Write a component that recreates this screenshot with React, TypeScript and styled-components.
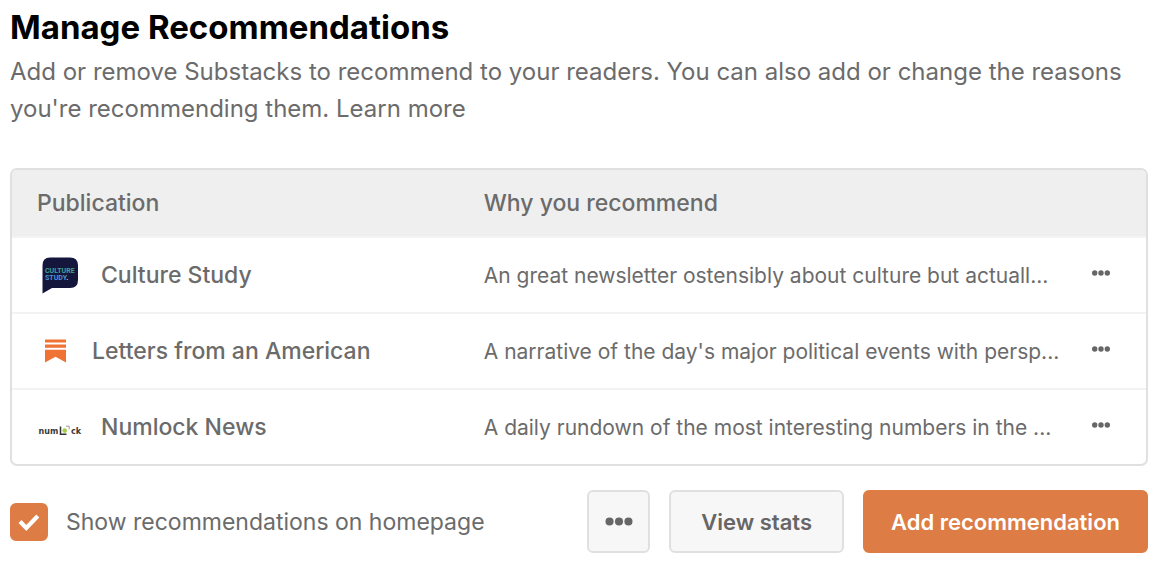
import React from "react";
import styled, { createGlobalStyle } from "styled-components";

const GlobalStyle = createGlobalStyle`
  *, *::before, *::after { box-sizing: border-box; }
  body {
    margin: 0;
    background: #fff;
    color: #6b6b6b;
    font-family: Inter, "Liberation Sans", sans-serif;
    font-size: 23px;
  }
`;

const Page = styled.main`
  padding: 6px 12px 16px 10px;
`;

const Title = styled.h1`
  margin: 0;
  color: #000;
  font-size: 33px;
  font-weight: 700;
  line-height: 42px;
`;

const Description = styled.p`
  margin: 5px 0 41px;
  font-size: 24px;
  line-height: 37px;
`;

const PlainLink = styled.a`
  color: inherit;
  text-decoration: none;
`;

const TableFrame = styled.div`
  overflow: hidden;
  border: 2px solid #e0e0e0;
  border-radius: 7px;
`;

const Table = styled.table`
  width: 100%;
  table-layout: fixed;
  border-collapse: separate;
  border-spacing: 0;
`;

const NameColumn = styled.col`
  width: 41.6%;
`;

const MenuColumn = styled.col`
  width: 74px;
`;

const HeadCell = styled.th`
  height: 66px;
  padding: 0;
  background: #efefef;
  font-size: 23px;
  font-weight: 500;
  text-align: left;

  &:first-child { padding-left: 25px; }
`;

const Row = styled.tr`
  & > * { border-top: 2px solid #f3f3f5; }
`;

const NameCell = styled.th`
  height: 76px;
  padding: 0 0 0 25px;
  font-size: 23px;
  font-weight: 500;
  text-align: left;
`;

const Publication = styled.div`
  display: flex;
  align-items: center;
  gap: 18px;
`;

const Logo = styled.span<{ $width: number }>`
  display: flex;
  justify-content: center;
  width: ${(p) => p.$width}px;

  svg { display: block; flex: none; }
`;

const ReasonCell = styled.td`
  padding: 0;
  font-size: 21px;
  white-space: nowrap;
`;

const MenuCell = styled.td`
  padding: 0 36px 4px 0;
`;

const RowMenuButton = styled.button`
  display: flex;
  margin-left: auto;
  padding: 0;
  border: 0;
  background: none;
  color: #666;
  cursor: pointer;
`;

const Footer = styled.footer`
  display: flex;
  align-items: center;
  justify-content: space-between;
  margin-top: 24px;
`;

const ToggleLabel = styled.label`
  display: flex;
  align-items: center;
  gap: 18px;
  cursor: pointer;
`;

const Tick = styled.span`
  display: grid;
  width: 38px;
  height: 38px;

  > * { grid-area: 1 / 1; }
  svg { pointer-events: none; }
`;

const TickInput = styled.input`
  width: 38px;
  height: 38px;
  margin: 0;
  appearance: none;
  border: 2px solid #dd7c44;
  border-radius: 6px;
  background: #fff;
  cursor: pointer;

  &:checked { background: #dd7c44; }
`;

const Actions = styled.div`
  display: flex;
  gap: 19px;
`;

const Button = styled.button<{ $primary?: boolean }>`
  display: flex;
  align-items: center;
  justify-content: center;
  height: 63px;
  padding: 0 ${(p) => (p.$primary ? 26 : 30)}px;
  border: 2px solid ${(p) => (p.$primary ? "#dd7c44" : "#e0e0e0")};
  border-radius: 6px;
  background: ${(p) => (p.$primary ? "#dd7c44" : "#f7f7f7")};
  color: ${(p) => (p.$primary ? "#fff" : "#666")};
  font-family: inherit;
  font-size: 22px;
  font-weight: 600;
  cursor: pointer;
`;

const MoreButton = styled(Button)`
  width: 63px;
  padding: 0;
`;

function Dots({ width }: { width: number }) {
  return (
    <svg width={width} height={Math.round(width / 3)} viewBox="0 0 30 10" fill="currentColor" aria-hidden="true">
      <circle cx="4.5" cy="5" r="4.5" />
      <circle cx="15" cy="5" r="4.5" />
      <circle cx="25.5" cy="5" r="4.5" />
    </svg>
  );
}

function CultureStudyLogo() {
  return (
    <svg width="36" height="37" viewBox="0 0 36 37" aria-hidden="true">
      <path d="M8 0.5H28Q36 0.5 36 8.5V23Q36 31 28 31H10L0.5 36.5V8.5Q0.5 0.5 8 0.5Z" fill="#15163c" />
      <g fontFamily="Roboto, sans-serif" fontSize="7" fontWeight="700">
        <text x="3" y="16" fill="#3fa39c">CULTURE</text>
        <text x="3" y="23.2" fill="#4a97d8">STUDY<tspan fill="#e8d9b0">.</tspan></text>
      </g>
    </svg>
  );
}

function BookmarkLogo() {
  return (
    <svg width="21" height="24" viewBox="0 0 21 24" fill="#ee7334" aria-hidden="true">
      <path d="M0 0.5H21V3.5H0ZM0 5.5H21V8.8H0ZM0 10.8H21V23.5L10.5 17.8L0 23.5Z" />
    </svg>
  );
}

function NumlockLogo() {
  return (
    <svg width="46" height="24" viewBox="0 0 46 24" aria-hidden="true">
      <g fontFamily="DejaVu Sans, sans-serif" fontSize="8" fontWeight="700" fill="#3a3a3a">
        <text x="1.5" y="18.5">num</text>
        <text x="34" y="18.5">ck</text>
      </g>
      <path d="M23.5 11.5V19.2H29.5" fill="none" stroke="#333" strokeWidth="1.5" />
      <circle cx="27.7" cy="15.6" r="2.3" fill="#a9cc4a" />
      <path d="M29 11.2H32.2V14.4" fill="none" stroke="#9a9a9a" strokeWidth="1" />
    </svg>
  );
}

const publications = [
  {
    name: "Culture Study",
    logo: <CultureStudyLogo />,
    logoWidth: 46,
    reason: "An great newsletter ostensibly about culture but actuall...",
  },
  {
    name: "Letters from an American",
    logo: <BookmarkLogo />,
    logoWidth: 37,
    reason: "A narrative of the day's major political events with persp...",
  },
  {
    name: "Numlock News",
    logo: <NumlockLogo />,
    logoWidth: 46,
    reason: "A daily rundown of the most interesting numbers in the ...",
  },
];

export default function App() {
  return (
    <>
      <GlobalStyle />
      <Page>
        <Title>Manage Recommendations</Title>
        <Description>
          Add or remove Substacks to recommend to your readers. You can also add or change the reasons
          you're recommending them. <PlainLink href="#learn-more">Learn more</PlainLink>
        </Description>
        <TableFrame>
          <Table>
            <colgroup>
              <NameColumn />
              <col />
              <MenuColumn />
            </colgroup>
            <thead>
              <tr>
                <HeadCell scope="col">Publication</HeadCell>
                <HeadCell scope="col" colSpan={2}>Why you recommend</HeadCell>
              </tr>
            </thead>
            <tbody>
              {publications.map((item) => (
                <Row key={item.name}>
                  <NameCell scope="row">
                    <Publication>
                      <Logo $width={item.logoWidth}>{item.logo}</Logo>
                      {item.name}
                    </Publication>
                  </NameCell>
                  <ReasonCell>{item.reason}</ReasonCell>
                  <MenuCell>
                    <RowMenuButton type="button" aria-label={`Options for ${item.name}`}>
                      <Dots width={18} />
                    </RowMenuButton>
                  </MenuCell>
                </Row>
              ))}
            </tbody>
          </Table>
        </TableFrame>
        <Footer>
          <ToggleLabel>
            <Tick>
              <TickInput type="checkbox" defaultChecked />
              <svg width="38" height="38" viewBox="0 0 38 38" aria-hidden="true">
                <path d="M10 18.5L16.3 25L27.8 13" fill="none" stroke="#fff" strokeWidth="4.2" />
              </svg>
            </Tick>
            Show recommendations on homepage
          </ToggleLabel>
          <Actions>
            <MoreButton type="button" aria-label="More options">
              <Dots width={28} />
            </MoreButton>
            <Button type="button">View stats</Button>
            <Button type="button" $primary>Add recommendation</Button>
          </Actions>
        </Footer>
      </Page>
    </>
  );
}
